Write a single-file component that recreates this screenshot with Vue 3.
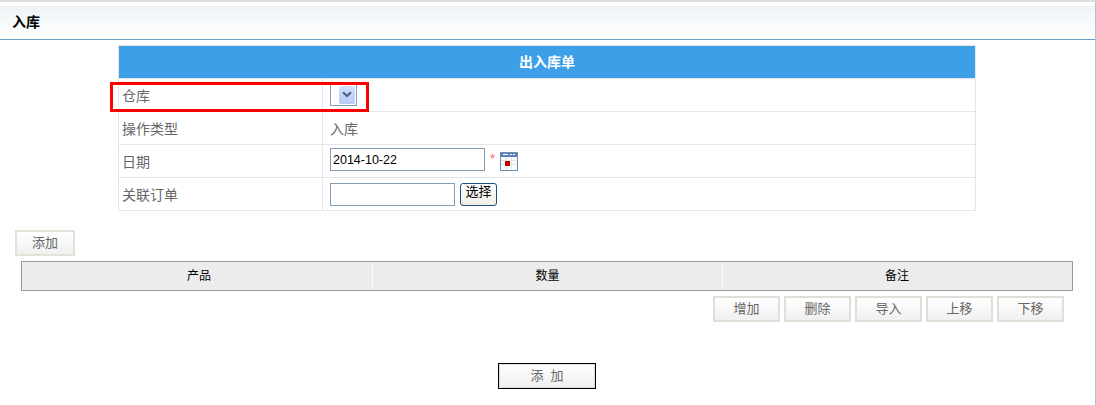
<template>
  <div class="pagina">
    <div class="encabezado">入库</div>

    <div class="ficha">
      <div class="ficha-titulo">出入库单</div>
      <div class="fila">
        <div class="etiqueta">仓库</div>
        <div class="valor">
          <span class="selector"><span class="selector-btn">
            <svg width="10" height="7" viewBox="0 0 10 7"><path d="M1 1.2 L5 5 L9 1.2" fill="none" stroke="#4d6185" stroke-width="2.2" /></svg>
          </span></span>
        </div>
        <!-- Marca roja sobre la fila -->
        <div class="marca"></div>
      </div>
      <div class="fila">
        <div class="etiqueta">操作类型</div>
        <div class="valor">入库</div>
      </div>
      <div class="fila">
        <div class="etiqueta">日期</div>
        <div class="valor">
          <input class="campo campo-fecha" type="text" value="2014-10-22" />
          <span class="asterisco">*</span>
          <svg class="calendario" width="18" height="19" viewBox="0 0 18 19">
            <rect x="0.5" y="0.5" width="17" height="18" fill="#f9f9f9" stroke="#6a8fb5" />
            <rect x="1" y="1" width="16" height="4" fill="#5b80b8" />
            <path d="M3 2.5h5M10 2.5h2M13 2.5h2" stroke="#fff" />
            <path d="M1 8.5h16M1 12.5h16M6.5 6v12M11.5 6v12" stroke="#e6e6e6" />
            <rect x="5" y="9" width="5" height="5" fill="#c00000" />
          </svg>
        </div>
      </div>
      <div class="fila">
        <div class="etiqueta">关联订单</div>
        <div class="valor">
          <input class="campo campo-orden" type="text" />
          <button class="btn-elegir" type="button">选择</button>
        </div>
      </div>
    </div>

    <div class="bloque-agregar">
      <button class="btn" type="button">添加</button>
    </div>

    <div class="tabla">
      <div v-for="col in columnas" :key="col" class="celda">{{ col }}</div>
    </div>

    <div class="acciones">
      <button v-for="acc in acciones" :key="acc" class="btn btn-accion" type="button">{{ acc }}</button>
    </div>

    <div class="pie">
      <button class="btn-enviar" type="button">添&nbsp;&nbsp;加</button>
    </div>
  </div>
</template>

<script setup>
const columnas = ['产品', '数量', '备注']
const acciones = ['增加', '删除', '导入', '上移', '下移']
</script>

<style>
html, body {
  margin: 0;
  background: #fff;
}
</style>

<style scoped>
.pagina {
  width: 1096px;
  height: 405px;
  box-sizing: border-box;
  overflow: hidden;
  border-top: 2px solid #dedede;
  border-right: 1px solid #a9c1dc;
  padding-top: 4px;
  font-family: "Liberation Sans", "Noto Sans CJK SC", sans-serif;
  background: #fff;
}

.encabezado {
  height: 33px;
  line-height: 33px;
  padding-left: 12px;
  font-size: 14px;
  font-weight: bold;
  color: #000;
  background: linear-gradient(#edf3f6, #fff);
  border-bottom: 1px solid #6f9bc0;
}

.ficha {
  width: 858px;
  box-sizing: border-box;
  margin: 5px 0 0 118px;
  border: 1px solid #e6e6e6;
  border-bottom-width: 0;
}

.ficha-titulo {
  height: 32px;
  line-height: 32px;
  text-align: center;
  font-size: 14px;
  font-weight: bold;
  color: #fff;
  background: #3d9fe8;
  border-bottom: 1px solid #e6e6e6;
}

.fila {
  position: relative;
  display: flex;
  height: 33px;
  box-sizing: border-box;
  border-bottom: 1px solid #e6e6e6;
  font-size: 14px;
  color: #666;
}

.etiqueta {
  width: 204px;
  box-sizing: border-box;
  padding-left: 3px;
  line-height: 34px;
  border-right: 1px solid #e6e6e6;
}

.valor {
  flex: 1;
  display: flex;
  align-items: center;
  padding-left: 7px;
}

.marca {
  position: absolute;
  left: -9px;
  top: 3px;
  width: 259px;
  height: 30px;
  box-sizing: border-box;
  border: 3px solid #f00;
}

.selector {
  display: flex;
  align-items: center;
  justify-content: flex-end;
  width: 27px;
  height: 22px;
  margin-top: -1px;
  box-sizing: border-box;
  padding-right: 1px;
  border: 1px solid #7f9db9;
}

.selector-btn {
  display: flex;
  align-items: center;
  justify-content: center;
  width: 16px;
  height: 18px;
  border-radius: 2px;
  background: linear-gradient(#d3dffb, #b7c9f5);
}

.campo {
  height: 23px;
  box-sizing: border-box;
  padding: 1px 2px 0;
  border: 1px solid #7f9db9;
  outline: none;
  font-family: "Liberation Sans", sans-serif;
  font-size: 12.5px;
  color: #000;
  background: #fff;
}

.campo-fecha {
  width: 155px;
  margin-top: -4px;
}

.campo-orden {
  width: 125px;
}

.asterisco {
  margin: 0 5px 6px 5px;
  font-size: 13px;
  color: #f66;
}

.calendario {
  margin-top: 1px;
}

.btn-elegir {
  width: 37px;
  height: 23px;
  margin-left: 5px;
  padding: 0 0 5px;
  border: 1px solid #1c5180;
  border-radius: 3px;
  font-family: inherit;
  font-size: 13px;
  line-height: 14px;
  color: #000;
  background: linear-gradient(#fff, #f0eee6);
}

.bloque-agregar {
  margin: 19px 0 0 15px;
  height: 26px;
}

.btn {
  display: block;
  width: 60px;
  height: 26px;
  padding: 0 0 3px;
  box-sizing: border-box;
  border: 2px solid #e4e2d8;
  font-family: inherit;
  font-size: 13px;
  color: #666;
  background: linear-gradient(#fff, #f0f0f0);
}

.tabla {
  display: grid;
  grid-template-columns: 350px 350px 1fr;
  width: 1052px;
  height: 30px;
  box-sizing: border-box;
  margin: 5px 0 0 21px;
  border: 1px solid #999;
  padding: 1px;
  background: #ececec;
}

.celda {
  line-height: 26px;
  text-align: center;
  font-size: 12px;
  color: #000;
  border-right: 1px solid #fff;
}

.celda:first-child {
  padding-left: 3px;
}

.celda:last-child {
  border-right: 0;
}

.acciones {
  display: flex;
  gap: 4px;
  margin: 5px 0 0 713px;
}

.btn-accion {
  width: 67px;
  border-color: #dedfd6;
}

.pie {
  display: flex;
  justify-content: center;
  margin: 41px 0 0 -1px;
}

.btn-enviar {
  width: 98px;
  height: 26px;
  padding: 0 0 3px;
  box-sizing: border-box;
  border: 1px solid #000;
  font-family: inherit;
  font-size: 13px;
  color: #666;
  background: linear-gradient(#fff, #efefef);
  box-shadow: inset 0 0 0 1px #ddd;
}
</style>
